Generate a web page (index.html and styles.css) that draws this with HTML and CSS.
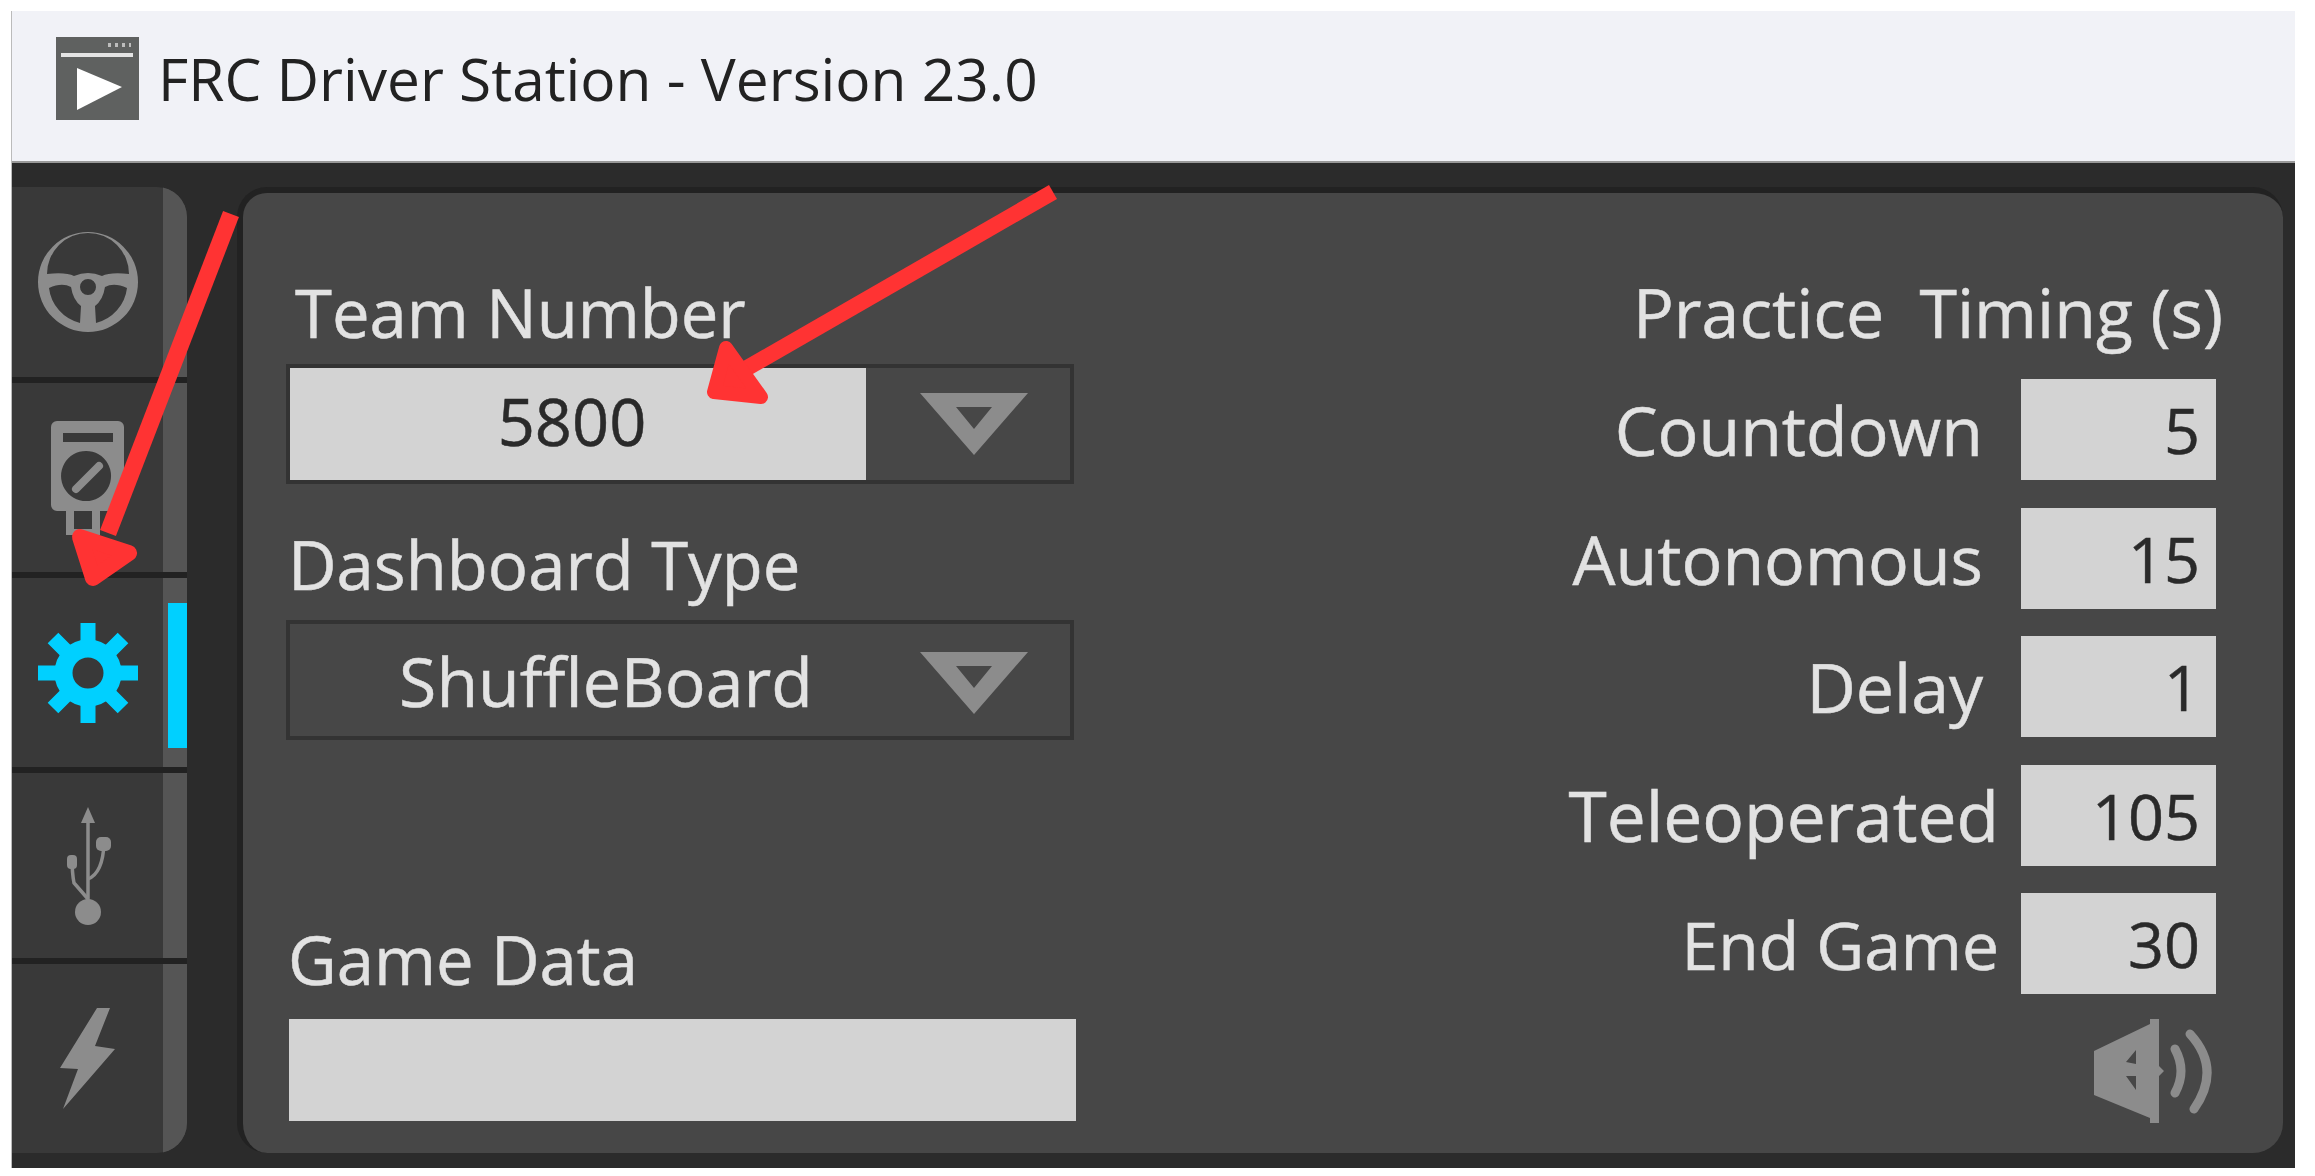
FILE: index.html
```html
<!DOCTYPE html>
<html lang="en">
<head>
    <meta charset="UTF-8">
    <title>FRC Driver Station</title>
    <link rel="stylesheet" href="styles.css">
</head>
<body>
  <div class="window">
    <div class="titlebar">
      <svg class="app-icon" viewBox="0 0 83 83">
        <rect width="83" height="83" fill="#5f6160"/>
        <rect x="5" y="16" width="72" height="4" fill="#e4e4e4"/>
        <path d="M52 6h3v4h-3zM59 6h3v4h-3zM66 6h3v4h-3zM73 6h2v4h-2z" fill="#bdbdbd"/>
        <polygon points="21,31 66,50 21,73" fill="#fff"/>
      </svg>
      <span class="title">FRC Driver Station - Version 23.0</span>
    </div>

    <div class="main">
      <div class="tabs">
        <div class="tab tab-first">
          <div class="tab-icon">
            <svg width="100" height="100" viewBox="0 0 100 100">
              <path fill="#8c8c8c" fill-rule="evenodd" d="M50 0a50 50 0 1 0 0 100a50 50 0 1 0 0-100zM9 42A41 41 0 0 1 91 42Q72 40 64 44Q50 38 36 44Q28 40 9 42zM11 56Q24 50 33 55Q35 68 43 74L42 91A41 41 0 0 1 11 56zM89 56Q76 50 67 55Q65 68 57 74L58 91A41 41 0 0 0 89 56zM50 47a8 8 0 1 0 0 16a8 8 0 1 0 0-16z"/>
            </svg>
          </div>
          <div class="tab-strip"></div>
        </div>
        <div class="tab tab-second">
          <div class="tab-icon">
            <svg width="74" height="114" viewBox="0 0 74 114">
              <path fill="#8c8c8c" fill-rule="evenodd" d="M6 0H67a6 6 0 0 1 6 6V84a6 6 0 0 1-6 6H49V114H15V90H6a6 6 0 0 1-6-6V6a6 6 0 0 1 6-6zM12 12V21H62V12zM35 30a25 25 0 1 0 0.1 0zM23 90V108H41V90z"/>
              <path d="M25 68L48 45" stroke="#8c8c8c" stroke-width="8" stroke-linecap="round"/>
            </svg>
          </div>
          <div class="tab-strip"></div>
        </div>
        <div class="tab tab-third">
          <div class="tab-icon">
            <svg width="100" height="100" viewBox="0 0 100 100">
              <circle cx="50" cy="50" r="24.5" fill="none" stroke="#00d0ff" stroke-width="18"/>
              <g stroke="#00d0ff" stroke-width="15">
                <path d="M50 0V20M50 80V100M0 50H20M80 50H100"/>
                <path d="M15 15L29 29M85 15L71 29M15 85L29 71M85 85L71 71"/>
              </g>
            </svg>
          </div>
          <div class="tab-strip"><div class="active-bar"></div></div>
        </div>
        <div class="tab tab-fourth">
          <div class="tab-icon">
            <svg width="50" height="118" viewBox="0 0 50 118">
              <g fill="none" stroke="#8c8c8c" stroke-width="3.5">
                <path d="M25 8V104"/>
                <path d="M25 72Q40 66 41 36"/>
                <path d="M25 92L11 76Q9 66 9 50"/>
              </g>
              <g fill="#8c8c8c">
                <polygon points="25,0 32,16 18,16"/>
                <rect x="33" y="30" width="15" height="14" rx="5"/>
                <rect x="4" y="48" width="10" height="14" rx="4"/>
                <circle cx="25" cy="105" r="13"/>
              </g>
            </svg>
          </div>
          <div class="tab-strip"></div>
        </div>
        <div class="tab tab-last">
          <div class="tab-icon">
            <svg width="56" height="102" viewBox="0 0 56 102">
              <polygon fill="#8c8c8c" points="37,0 50,0 35,38 55,41 3,101 18,61 0,60"/>
            </svg>
          </div>
          <div class="tab-strip"></div>
        </div>
      </div>

      <div class="panel">
        <div class="col-left">
          <div class="label">Team Number</div>
          <div class="combo">
            <div class="combo-value filled">5800</div>
            <svg class="combo-arrow" viewBox="0 0 108 62">
              <path fill="#8c8c8c" fill-rule="evenodd" d="M0 0H108L54 62zM36 14L54 36L72 14z"/>
            </svg>
          </div>
          <div class="label label-dash">Dashboard Type</div>
          <div class="combo">
            <div class="combo-value shifted">ShuffleBoard</div>
            <svg class="combo-arrow arrow-low" viewBox="0 0 108 62">
              <path fill="#8c8c8c" fill-rule="evenodd" d="M0 0H108L54 62zM36 14L54 36L72 14z"/>
            </svg>
          </div>
          <div class="label label-game">Game Data</div>
          <div class="game-input"></div>
        </div>

        <div class="col-right">
          <div class="label label-timing">Practice&nbsp; Timing (s)</div>
          <div class="time-row"><span class="row-label">Countdown</span><div class="time-box">5</div></div>
          <div class="time-row"><span class="row-label">Autonomous</span><div class="time-box">15</div></div>
          <div class="time-row"><span class="row-label">Delay</span><div class="time-box">1</div></div>
          <div class="time-row"><span class="row-label wide tele">Teleoperated</span><div class="time-box">105</div></div>
          <div class="time-row"><span class="row-label wide end">End Game</span><div class="time-box">30</div></div>
          <svg class="speaker" width="122" height="104" viewBox="0 0 122 104">
            <path fill="#8c8c8c" fill-rule="evenodd" d="M0 32L56 5V0H65V47L70 52L65 57V104H56V99L0 76zM32 43L42 31V45zM32 57H42V71z"/>
            <path d="M81 30Q93 52 81 74M96 15Q128 50 100 90" fill="none" stroke="#8c8c8c" stroke-width="9" stroke-linecap="round"/>
          </svg>
        </div>
      </div>
    </div>
  </div>

  <!-- red annotation arrows drawn over the screenshot -->
  <svg class="arrows" width="2315" height="1176" viewBox="0 0 2315 1176">
    <g fill="#ff3333" stroke="#ff3333" stroke-linejoin="round">
      <path d="M231 214L108 533" fill="none" stroke-width="17"/>
      <polygon points="80,537 129,553 93,578" stroke-width="16"/>
      <path d="M1053 192L735 375" fill="none" stroke-width="16"/>
      <polygon points="726,348 714,392 761,397" stroke-width="14"/>
    </g>
  </svg>
</body>
</html>
```

FILE: styles.css
```css
body {
  margin: 0;
  background: #fff;
  font-family: "Open Sans", sans-serif;
}

.window {
  width: 2284px;
  height: 1157px;
  margin: 11px 0 0 11px;
  display: flex;
  flex-direction: column;
  border-left: 1px solid #bbb;
  box-sizing: border-box;
  filter: blur(0.7px);
}

.titlebar {
  height: 152px;
  flex: none;
  background: #f1f2f7;
  display: flex;
  align-items: center;
  padding-left: 44px;
  padding-bottom: 16px;
  box-sizing: border-box;
  border-bottom: 2px solid #999;
}

.app-icon {
  width: 83px;
  height: 83px;
}

.title {
  margin-left: 19px;
  font-size: 58.6px;
  color: #222;
  white-space: nowrap;
}

.main {
  flex: 1;
  background: #2b2b2b;
  display: flex;
  padding: 24px 12px 15px 0;
  gap: 50px;
}

.tabs {
  width: 175px;
  display: flex;
  flex-direction: column;
  gap: 6px;
  background: #222;
  border-radius: 0 30px 30px 0;
}

.tab {
  display: flex;
  background: #393939;
  overflow: hidden;
}

.tab-first { height: 190px; border-top-right-radius: 30px; }
.tab-second { height: 189px; }
.tab-third { height: 189px; }
.tab-fourth { height: 185px; }
.tab-last { flex: 1; border-bottom-right-radius: 30px; }

.tab-icon {
  flex: 1;
  display: flex;
  align-items: center;
  justify-content: center;
}

.tab-strip {
  width: 24px;
  background: #555;
  display: flex;
  align-items: center;
  justify-content: flex-end;
}

.active-bar {
  width: 19px;
  height: 145px;
  margin-top: 6px;
  background: #00d0ff;
}

.panel {
  flex: 1;
  background: #474747;
  border-radius: 30px;
  border-top: 6px solid #222;
  border-left: 6px solid #222;
  display: flex;
  justify-content: space-between;
  padding: 83px 67px 0 43px;
}

.col-left {
  width: 790px;
}

.label {
  font-size: 67px;
  line-height: 72px;
  color: #e2e2e2;
  -webkit-text-stroke: 0.5px #e2e2e2;
  padding-left: 9px;
  white-space: nowrap;
}

.label-dash { margin-top: 44px; padding-left: 2px; margin-bottom: 20px; }
.label-game { margin-top: 183px; padding-left: 2px; margin-bottom: 24px; }

.combo {
  height: 120px;
  box-sizing: border-box;
  width: 788px;
  margin-top: 16px;
  display: flex;
  align-items: center;
  background: #474747;
  border: 4px solid #333;
}

.label-dash + .combo { margin-top: 0; }

.combo-value {
  width: 576px;
  box-sizing: border-box;
  align-self: stretch;
  display: flex;
  align-items: center;
  justify-content: center;
  font-size: 65px;
  color: #e2e2e2;
  -webkit-text-stroke: 0.5px #e2e2e2;
}

.combo-value.filled {
  background: #d3d3d3;
  color: #2a2a2a;
  -webkit-text-stroke: 0.5px #2a2a2a;
  padding-right: 12px;
  padding-bottom: 6px;
}

.combo-value.shifted {
  font-size: 68px;
  padding-left: 56px;
}

.combo-arrow {
  width: 108px;
  height: 62px;
  margin-left: 54px;
}

.arrow-low {
  margin-top: 6px;
}

.game-input {
  width: 787px;
  height: 102px;
  margin-left: 3px;
  background: #d3d3d3;
}

.col-right {
  display: flex;
  flex-direction: column;
  align-items: flex-end;
}

.label-timing {
  font-size: 68px;
  margin-right: -7px;
  margin-bottom: 31px;
}

.time-row {
  display: flex;
  align-items: center;
  justify-content: flex-end;
  height: 101px;
  margin-bottom: 27.5px;
}

.row-label {
  font-size: 68px;
  color: #e2e2e2;
  -webkit-text-stroke: 0.5px #e2e2e2;
  margin-right: 38px;
  white-space: nowrap;
}

.row-label.wide { margin-right: 22px; }
.row-label.tele { font-size: 69.5px; }
.row-label.end { font-size: 66px; }

.time-box {
  width: 195px;
  height: 101px;
  background: #d3d3d3;
  color: #2a2a2a;
  -webkit-text-stroke: 0.5px #2a2a2a;
  font-size: 63px;
  line-height: 101px;
  text-align: right;
  padding-right: 16px;
  box-sizing: border-box;
}

.speaker {
  margin-top: -3px;
}

.arrows {
  position: absolute;
  left: 0;
  top: 0;
}
```
